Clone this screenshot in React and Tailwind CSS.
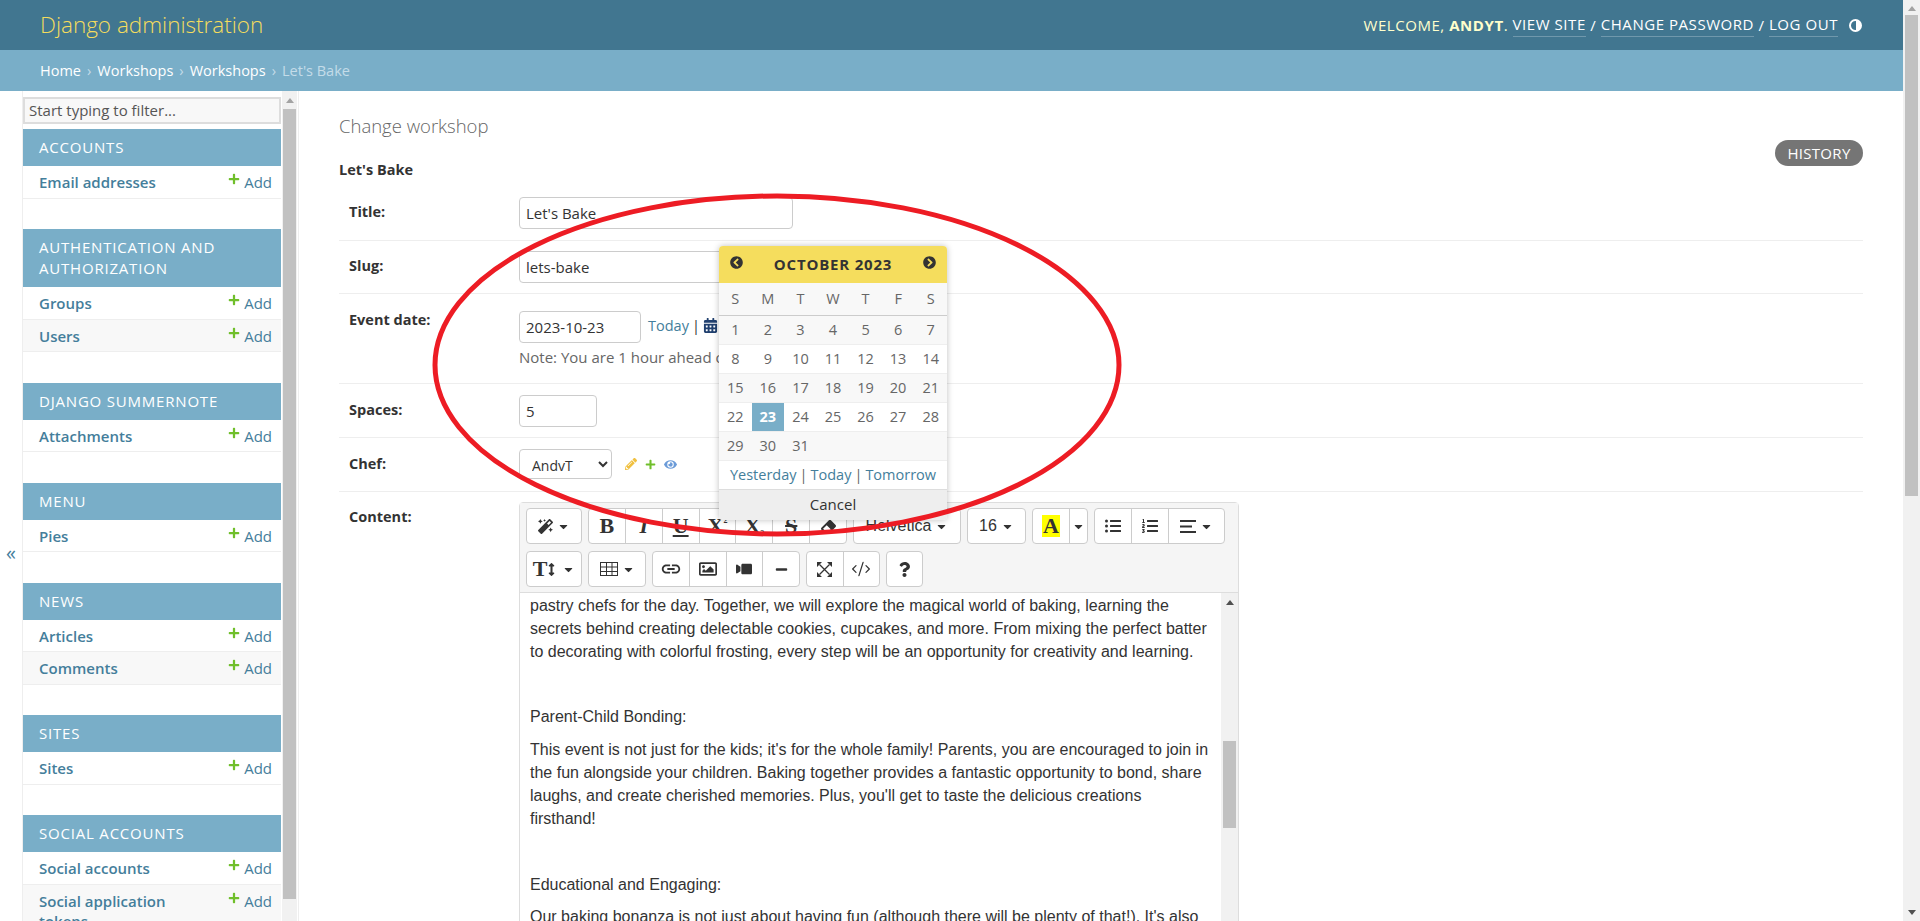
import {
  FaMagic, FaEraser, FaListUl, FaListOl, FaCaretDown, FaRegImage, FaVideo,
  FaMinus, FaQuestion, FaArrowsAltV, FaPlus, FaPencilAlt, FaEye,
  FaCalendarAlt, FaChevronCircleLeft, FaChevronCircleRight,
} from 'react-icons/fa'
import { MdLink } from 'react-icons/md'
import { CodeXml } from 'lucide-react'

const navGroups = [
  { title: ['ACCOUNTS'], items: ['Email addresses'] },
  { title: ['AUTHENTICATION AND', 'AUTHORIZATION'], items: ['Groups', 'Users'] },
  { title: ['DJANGO SUMMERNOTE'], items: ['Attachments'] },
  { title: ['MENU'], items: ['Pies'] },
  { title: ['NEWS'], items: ['Articles', 'Comments'] },
  { title: ['SITES'], items: ['Sites'] },
  { title: ['SOCIAL ACCOUNTS'], items: ['Social accounts', 'Social application tokens'] },
]

const weeks = [
  [1, 2, 3, 4, 5, 6, 7],
  [8, 9, 10, 11, 12, 13, 14],
  [15, 16, 17, 18, 19, 20, 21],
  [22, 23, 24, 25, 26, 27, 28],
  [29, 30, 31, '', '', '', ''],
]

function Arrow({ up, className }) {
  return (
    <div
      className={`w-0 h-0 border-x-[4px] border-x-transparent ${up ? 'border-b-[5px] border-b-[#a3a3a3]' : 'border-t-[5px] border-t-[#505050]'} ${className || ''}`}
    />
  )
}

function Sidebar() {
  return (
    <div className="w-[277px] h-full flex border-x border-[#eeeeee] overflow-hidden">
      <div className="w-[258px] shrink-0 pt-[6px]">
        <div className="h-[27px] border-2 border-[#dddddd] bg-[#f8f8f8] px-[4px] flex items-center text-[15px] text-[#555555] mb-[5px]">
          Start typing to filter...
        </div>
        {navGroups.map((group) => (
          <div key={group.title[0]} className="mb-[30.5px]">
            <div className="bg-[#79aec8] text-white text-[15px] tracking-[0.8px] leading-[21px] px-[16px] py-[8px]">
              {group.title.map((line) => (
                <div key={line}>{line}</div>
              ))}
            </div>
            {group.items.map((item, i) => (
              <div
                key={item}
                className={`flex justify-between pl-[16px] pr-[9px] pt-[6px] pb-[5px] min-h-[32.5px] border-b border-[#eeeeee] text-[15px] leading-[20px] text-[#447e9b] ${i % 2 ? 'bg-[#f8f8f8]' : 'bg-white'}`}
              >
                <span className="font-semibold w-[175px]">{item}</span>
                <span className="flex items-start shrink-0">
                  <FaPlus className="text-[#70bf2b] text-[12px] mr-[4px] mt-[1px]" />
                  Add
                </span>
              </div>
            ))}
          </div>
        ))}
      </div>
      <div className="w-[15px] ml-[1px] shrink-0 bg-[#f1f1f1] flex flex-col items-center">
        <Arrow up className="mt-[7px] mb-[6px]" />
        <div className="w-[13px] h-[790px] bg-[#c1c1c1]" />
      </div>
    </div>
  )
}

function FormRow({ label, height, top, children }) {
  return (
    <div className={`flex px-[10px] border-b border-[#eeeeee] ${height} ${top}`}>
      <div className="w-[170px] shrink-0 font-bold text-[14.5px] text-[#333333] leading-[30px]">{label}</div>
      <div className="flex-1 min-w-0">{children}</div>
    </div>
  )
}

function TextInput({ width, value }) {
  return (
    <div className={`h-[32px] ${width} border border-[#cccccc] rounded-[4px] px-[6px] flex items-center text-[15px] text-[#333333] bg-white shrink-0`}>
      {value}
    </div>
  )
}

function ToolGroup({ width, children }) {
  return <div className={`flex h-full ${width} bg-white border border-[#cccccc] rounded-[4px] divide-x divide-[#cccccc]`}>{children}</div>
}

function Tool({ width, children }) {
  return <div className={`flex items-center justify-center gap-[4px] h-full text-[#333333] ${width || 'flex-1'}`}>{children}</div>
}

const Caret = () => <FaCaretDown className="text-[13px] text-[#333333]" />
const serif = "font-['Liberation_Serif',serif] font-bold text-[22px] leading-none"

function TableIcon() {
  return (
    <svg width="18" height="14" viewBox="0 0 18 14" fill="none" stroke="#333333" strokeWidth="1">
      <rect x="0.5" y="0.5" width="17" height="13" />
      <path d="M6.5 0.5v13M12 0.5v13M0.5 5h17M0.5 9.5h17" />
    </svg>
  )
}

function ExpandIcon() {
  return (
    <svg width="15" height="15" viewBox="0 0 15 15" fill="#333333">
      <path d="M2.5 2.5L12.5 12.5M12.5 2.5L2.5 12.5" stroke="#333333" strokeWidth="1.3" />
      <path d="M0 0h5L0 5zM15 0v5L10 0zM0 15v-5l5 5zM15 15h-5l5-5z" />
    </svg>
  )
}

function AlignIcon() {
  return (
    <svg width="16" height="13" viewBox="0 0 16 13" fill="#333333">
      <path d="M0 0h16v2H0zM0 5.5h12v2H0zM0 11h16v2H0z" />
    </svg>
  )
}

function Toolbar() {
  return (
    <div className="h-[90px] bg-[#f5f5f5] border-b border-[#dddddd] pl-[6px] pt-[5px] font-['Liberation_Sans',sans-serif]">
      <div className="flex gap-[6px] h-[36px] mb-[7px]">
        <ToolGroup width="w-[56px]"><Tool><FaMagic className="text-[15px]" /><Caret /></Tool></ToolGroup>
        <ToolGroup width="w-[259px]">
          <Tool><span className={serif}>B</span></Tool>
          <Tool><span className={`${serif} italic`}>I</span></Tool>
          <Tool><span className={`${serif} underline`}>U</span></Tool>
          <Tool><span className={serif}>X<sup className="text-[8px] top-[-10px]">2</sup></span></Tool>
          <Tool><span className={serif}>X<sub className="text-[8px] bottom-[-3px]">2</sub></span></Tool>
          <Tool><span className={`${serif} line-through`}>S</span></Tool>
          <Tool><FaEraser className="text-[15px]" /></Tool>
        </ToolGroup>
        <ToolGroup width="w-[108px]"><Tool><span className="text-[16px]">Helvetica</span><Caret /></Tool></ToolGroup>
        <ToolGroup width="w-[59px]"><Tool><span className="text-[16px]">16</span><Caret /></Tool></ToolGroup>
        <ToolGroup width="w-[56px]">
          <Tool width="w-[37px]"><span className={`${serif} bg-[#ffff00] px-[1px]`}>A</span></Tool>
          <Tool><Caret /></Tool>
        </ToolGroup>
        <ToolGroup width="w-[131px]">
          <Tool width="w-[37px]"><FaListUl className="text-[16px]" /></Tool>
          <Tool width="w-[37px]"><FaListOl className="text-[16px]" /></Tool>
          <Tool><AlignIcon /><Caret /></Tool>
        </ToolGroup>
      </div>
      <div className="flex gap-[6px] h-[36px]">
        <ToolGroup width="w-[56px]">
          <Tool><span className="flex items-center"><span className={serif}>T</span><FaArrowsAltV className="text-[13px] -ml-[2px]" /></span><Caret /></Tool>
        </ToolGroup>
        <ToolGroup width="w-[58px]"><Tool><TableIcon /><Caret /></Tool></ToolGroup>
        <ToolGroup width="w-[148px]">
          <Tool><MdLink className="text-[22px]" /></Tool>
          <Tool><FaRegImage className="text-[18px]" /></Tool>
          <Tool><FaVideo className="text-[16px] -scale-x-100" /></Tool>
          <Tool><FaMinus className="text-[13px]" /></Tool>
        </ToolGroup>
        <ToolGroup width="w-[74px]">
          <Tool><ExpandIcon /></Tool>
          <Tool><CodeXml size={20} strokeWidth={1.5} /></Tool>
        </ToolGroup>
        <ToolGroup width="w-[37px]"><Tool><FaQuestion className="text-[15px]" /></Tool></ToolGroup>
      </div>
    </div>
  )
}

function Editor() {
  return (
    <div className="w-[720px] h-[500px] border border-[#dddddd] rounded-t-[4px] shrink-0">
      <Toolbar />
      <div className="flex h-[400px]">
        <div className="flex-1 pl-[10px] pr-[11px] pt-[2px] font-['Liberation_Sans',sans-serif] text-[16px] leading-[22.86px] text-[#333333] [&>p]:mb-[10px]">
          <p>
            pastry chefs for the day. Together, we will explore the magical world of baking, learning the secrets behind
            creating delectable cookies, cupcakes, and more. From mixing the perfect batter to decorating with colorful
            frosting, every step will be an opportunity for creativity and learning.
          </p>
          <p>&nbsp;</p>
          <p>Parent-Child Bonding:</p>
          <p>
            This event is not just for the kids; it's for the whole family! Parents, you are encouraged to join in the fun
            alongside your children. Baking together provides a fantastic opportunity to bond, share laughs, and create
            cherished memories. Plus, you'll get to taste the delicious creations firsthand!
          </p>
          <p>&nbsp;</p>
          <p>Educational and Engaging:</p>
          <p>Our baking bonanza is not just about having fun (although there will be plenty of that!). It's also</p>
        </div>
        <div className="w-[17px] shrink-0 bg-[#f1f1f1] flex flex-col items-center">
          <Arrow up className="mt-[7px] !border-b-[#505050]" />
          <div className="w-[13px] h-[87px] bg-[#c1c1c1] mt-[136px]" />
        </div>
      </div>
    </div>
  )
}

function CalendarBox() {
  return (
    <div className="absolute left-[719px] top-[246px] w-[228px] rounded-[4px] overflow-hidden bg-white shadow-[0_0_6px_rgba(0,0,0,0.25)] text-[14.5px]">
      <div className="h-[37px] bg-[#f5dd5d] flex items-center justify-between px-[11px] text-[#333333]">
        <FaChevronCircleLeft className="text-[13px] -mt-[4px]" />
        <span className="font-bold text-[15px] tracking-[0.8px]">OCTOBER 2023</span>
        <FaChevronCircleRight className="text-[13px] -mt-[4px]" />
      </div>
      <div className="h-[33px] bg-[#f8f8f8] border-b border-[#cccccc] grid grid-cols-7 text-center items-center text-[#666666]">
        {['S', 'M', 'T', 'W', 'T', 'F', 'S'].map((d, i) => (
          <div key={i}>{d}</div>
        ))}
      </div>
      {weeks.map((week, w) => (
        <div key={w} className={`h-[29px] grid grid-cols-7 text-center border-b border-[#eeeeee] text-[#666666] ${w % 2 ? 'bg-white' : 'bg-[#f8f8f8]'}`}>
          {week.map((day, i) => (
            <div
              key={i}
              className={`flex items-center justify-center ${day === 23 ? 'bg-[#79aec8] text-white font-bold' : ''}`}
            >
              {day}
            </div>
          ))}
        </div>
      ))}
      <div className="h-[28px] flex items-center justify-center text-[#447e9b] gap-[3px]">
        <span>Yesterday</span><span className="text-[#666666]">|</span><span>Today</span><span className="text-[#666666]">|</span><span>Tomorrow</span>
      </div>
      <div className="h-[31px] bg-[#eeeeee] flex items-center justify-center text-[15px] text-[#333333] border-t border-[#dddddd] pb-[2px]">Cancel</div>
    </div>
  )
}

export default function App() {
  return (
    <div className="relative w-[1920px] h-[921px] overflow-hidden flex bg-white font-['Open_Sans',sans-serif]">
      <div className="w-[1903px] h-full flex flex-col shrink-0">
        <header className="h-[50px] shrink-0 bg-[#417690] flex items-center justify-between pl-[40px] pr-[41px]">
          <div className="text-[22.5px] font-light text-[#f5dd5d]">Django administration</div>
          <div className="flex items-center text-[15px] text-[#ffffcc] tracking-[0.55px]">
            <span>WELCOME, <strong className="font-bold">ANDYT</strong>.&nbsp;</span>
            <span className="text-white border-b border-white/25">VIEW SITE</span>
            <span className="text-white">&nbsp;/&nbsp;</span>
            <span className="text-white border-b border-white/25">CHANGE PASSWORD</span>
            <span className="text-white">&nbsp;/&nbsp;</span>
            <span className="text-white border-b border-white/25">LOG OUT</span>
            <span className="ml-[11px] w-[13px] h-[13px] rounded-full border-2 border-white bg-[linear-gradient(90deg,transparent_50%,#ffffff_50%)]" />
          </div>
        </header>
        <div className="h-[41px] shrink-0 bg-[#79aec8] flex items-center px-[40px] text-[14.5px] text-[#c4dce8] gap-[6px]">
          <span className="text-white">Home</span><span>›</span>
          <span className="text-white">Workshops</span><span>›</span>
          <span className="text-white">Workshops</span><span>›</span>
          <span>Let's Bake</span>
        </div>
        <div className="flex-1 min-h-0 flex">
          <div className="w-[22px] shrink-0 flex items-center justify-center text-[#447e9b] text-[20px] pt-[94px]">«</div>
          <Sidebar />
          <main className="flex-1 min-w-0 pl-[40px] pr-[40px] overflow-hidden">
            <div className="flex justify-between h-[96px]">
              <div>
                <h1 className="text-[18.5px] font-light text-[#666666] mt-[22px] leading-[26px]">Change workshop</h1>
                <div className="font-bold text-[14.5px] text-[#333333] mt-[20px]">Let's Bake</div>
              </div>
              <div className="mt-[49px] h-[26px] w-[88px] rounded-[13px] bg-[#757575] text-white text-[15px] tracking-[0.3px] flex items-center justify-center">HISTORY</div>
            </div>
            <FormRow label="Title:" height="h-[54px]" top="pt-[10px]">
              <TextInput width="w-[274px]" value="Let's Bake" />
            </FormRow>
            <FormRow label="Slug:" height="h-[53px]" top="pt-[10px]">
              <TextInput width="w-[274px]" value="lets-bake" />
            </FormRow>
            <FormRow label="Event date:" height="h-[90px]" top="pt-[11px]">
              <div className="flex items-start pt-[6px]">
                <TextInput width="w-[122px]" value="2023-10-23" />
                <span className="ml-[7px] text-[14.5px] leading-[30px] text-[#447e9b]">Today</span>
                <span className="mx-[3px] text-[14.5px] leading-[30px] text-[#333333]">|</span>
                <FaCalendarAlt className="text-[#21406f] text-[15px] mt-[7px] shrink-0" />
              </div>
              <div className="w-[200px] h-[22px] overflow-hidden whitespace-nowrap text-[15px] text-[#666666] mt-[3px]">Note: You are 1 hour ahead of server time.</div>
            </FormRow>
            <FormRow label="Spaces:" height="h-[54px]" top="pt-[11px]">
              <TextInput width="w-[78px]" value="5" />
            </FormRow>
            <FormRow label="Chef:" height="h-[54px]" top="pt-[11px]">
              <div className="flex items-center">
                <select className="h-[30px] w-[93px] border border-[#cccccc] rounded-[4px] pl-[8px] pt-[3px] text-[14px] text-[#333333] bg-white">
                  <option>AndvT</option>
                </select>
                <FaPencilAlt className="ml-[13px] text-[#f0c040] text-[12px]" />
                <FaPlus className="ml-[8px] text-[#70bf2b] text-[11px]" />
                <FaEye className="ml-[8px] text-[#6b9bd8] text-[13px]" />
              </div>
            </FormRow>
            <div className="flex px-[10px] pt-[10px]">
              <div className="w-[170px] shrink-0 font-bold text-[14.5px] text-[#333333] leading-[30px]">Content:</div>
              <Editor />
            </div>
          </main>
        </div>
      </div>
      <div className="w-[17px] h-full shrink-0 bg-[#f1f1f1] flex flex-col items-center">
        <Arrow up className="mt-[6px] mb-[4px]" />
        <div className="w-[13px] h-[481px] bg-[#c1c1c1]" />
        <Arrow className="mt-auto mb-[6px]" />
      </div>
      <CalendarBox />
      <svg className="absolute left-0 top-0 pointer-events-none" width="1920" height="921" fill="none">
        <ellipse cx="777" cy="365" rx="342" ry="169" stroke="#ed1c24" strokeWidth="5" />
      </svg>
    </div>
  )
}
